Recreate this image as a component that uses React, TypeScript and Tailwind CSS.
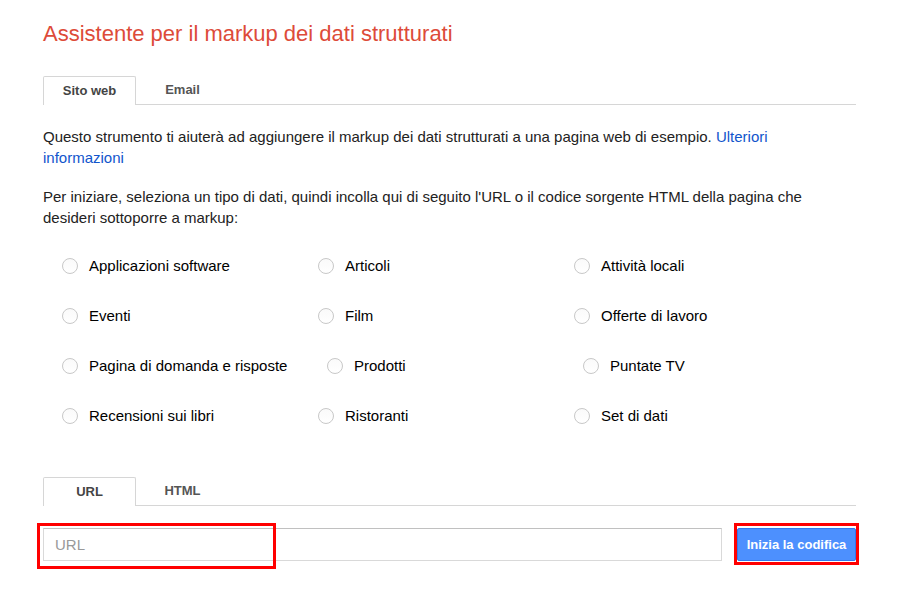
import { useState } from "react";

const types = [
  ["Applicazioni software", "Articoli", "Attività locali"],
  ["Eventi", "Film", "Offerte di lavoro"],
  ["Pagina di domanda e risposte", "Prodotti", "Puntate TV"],
  ["Recensioni sui libri", "Ristoranti", "Set di dati"],
];

const Tabs = ({
  tabs,
  active,
  setActive,
}: {
  tabs: string[];
  active: number;
  setActive: (i: number) => void;
}) => {
  return (
    <div className="flex h-[29px] border-b border-[#d6d6d6]">
      {tabs.map((tab, i) => (
        <div
          key={tab}
          onClick={() => setActive(i)}
          className={
            i === active
              ? "w-[93px] h-[29px] flex items-center justify-center text-[13px] font-bold text-[#444] bg-white border border-b-0 border-[#d6d6d6] rounded-t-[2px] cursor-pointer"
              : "w-[93px] h-[28px] flex items-center justify-center text-[13px] font-bold text-[#555] cursor-pointer"
          }
        >
          {tab}
        </div>
      ))}
    </div>
  );
};

const Radio = ({
  label,
  checked,
  onClick,
  shifted,
}: {
  label: string;
  checked: boolean;
  onClick: () => void;
  shifted?: boolean;
}) => {
  return (
    <div
      className={
        shifted
          ? "flex items-center gap-[11px] cursor-pointer ml-[9px]"
          : "flex items-center gap-[11px] cursor-pointer"
      }
      onClick={onClick}
    >
      <div className="w-[16px] h-[16px] rounded-full border border-[#c8c8c8] bg-gradient-to-b from-[#fafafa] to-white flex items-center justify-center shrink-0">
        {checked && <div className="w-[6px] h-[6px] rounded-full bg-[#444]"></div>}
      </div>
      <div className="text-[15px] text-black">{label}</div>
    </div>
  );
};

const App = () => {
  const [mainTab, setMainTab] = useState(0);
  const [sourceTab, setSourceTab] = useState(0);
  const [selected, setSelected] = useState("");
  const [url, setUrl] = useState("");

  return (
    <div className="w-[900px] h-[610px] bg-white font-['Liberation_Sans',Arial,sans-serif] pl-[43px] pr-[44px] pt-[19px]">
      <div className="text-[22px] leading-[30px] text-[#dd4b39]">
        {"Assistente per il markup dei dati strutturati"}
      </div>

      <div className="mt-[27px]">
        <Tabs tabs={["Sito web", "Email"]} active={mainTab} setActive={setMainTab} />
      </div>

      <div className="mt-[21px] text-[15px] leading-[21px] text-[#222] w-[800px]">
        {"Questo strumento ti aiuterà ad aggiungere il markup dei dati strutturati a una pagina web di esempio. "}
        <a className="text-[#1155cc] cursor-pointer">{"Ulteriori informazioni"}</a>
      </div>

      <div className="mt-[18px] text-[15px] leading-[21px] text-[#222] w-[800px]">
        {"Per iniziare, seleziona un tipo di dati, quindi incolla qui di seguito l'URL o il codice sorgente HTML della pagina che desideri sottoporre a markup:"}
      </div>

      <div className="mt-[27px] ml-[19px] flex flex-col gap-[30px]">
        {types.map((row, r) => (
          <div key={r} className="grid grid-cols-[256px_256px_256px] h-[20px]">
            {row.map((label, c) => (
              <Radio
                key={label}
                label={label}
                checked={selected === label}
                onClick={() => setSelected(label)}
                shifted={r === 2 && c > 0}
              />
            ))}
          </div>
        ))}
      </div>

      <div className="mt-[52px]">
        <Tabs tabs={["URL", "HTML"]} active={sourceTab} setActive={setSourceTab} />
      </div>

      <div className="mt-[22px] flex items-center gap-[15px]">
        <div className="relative flex-1">
          <input
            value={url}
            onChange={(e) => setUrl(e.target.value)}
            placeholder="URL"
            className="w-full h-[33px] border border-[#d9d9d9] border-t-[#c0c0c0] px-[11px] text-[15px] text-[#222] placeholder:text-[#999] outline-none"
          />
          <div className="absolute left-[-6px] top-[-5px] w-[239px] h-[46px] border-[3px] border-[#ff0000] pointer-events-none"></div>
        </div>
        <div className="relative">
          <button className="w-[119px] h-[33px] bg-[#4d90fe] border border-[#3079ed] rounded-[2px] text-white text-[13px] font-bold">
            {"Inizia la codifica"}
          </button>
          <div className="absolute left-[-3px] top-[-5px] w-[125px] h-[42px] border-[3px] border-[#ff0000] pointer-events-none"></div>
        </div>
      </div>
    </div>
  );
};

export default App;
